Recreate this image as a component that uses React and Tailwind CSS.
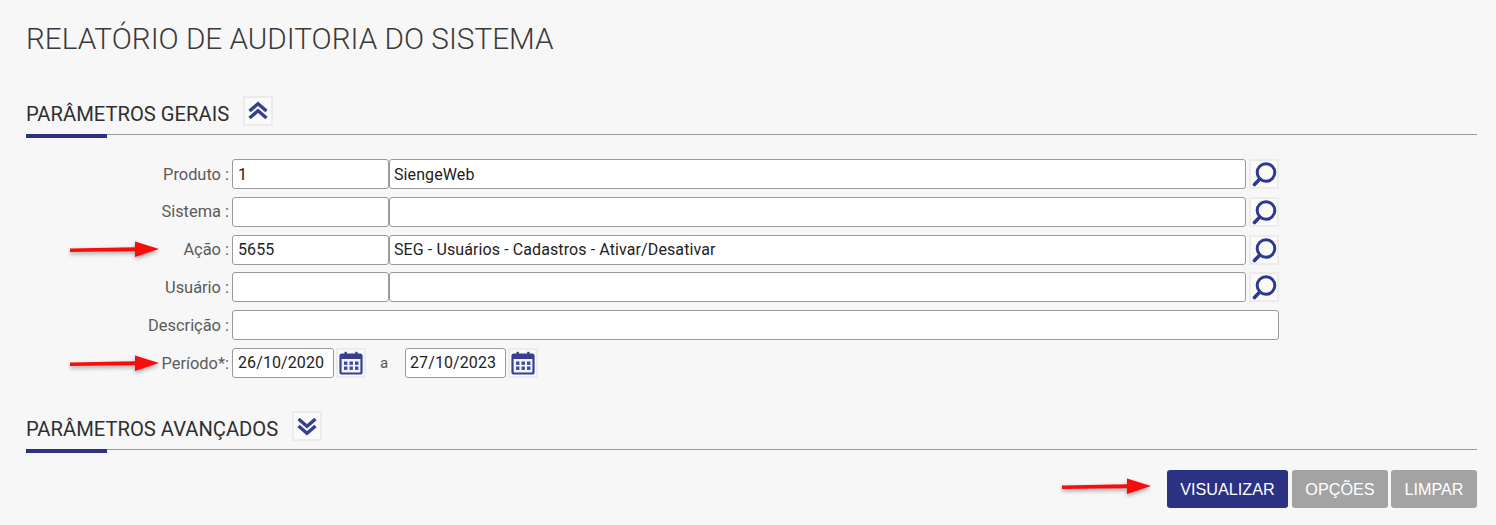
import React from "react";

const Chevrons = ({ up }) => (
  <svg width="22" height="20" viewBox="0 0 22 20" fill="none" stroke="#36408f" strokeWidth="3.4" strokeLinejoin="miter" className={up ? "" : "rotate-180"}>
    <path d="M2.5 10 L11 2.8 L19.5 10" />
    <path d="M2.5 17 L11 9.8 L19.5 17" />
  </svg>
);

const Magnifier = () => (
  <svg width="26" height="26" viewBox="0 0 26 26" fill="none" stroke="#2e3a8f" className="shrink-0">
    <circle cx="15" cy="11.5" r="8.8" strokeWidth="3" />
    <path d="M8.8 18 L3.5 23.5" strokeWidth="3.6" strokeLinecap="round" />
  </svg>
);

const Calendar = () => (
  <svg width="24" height="24" viewBox="0 0 24 24" fill="none">
    <rect x="1.5" y="3.5" width="21" height="19" rx="1.5" stroke="#36408f" strokeWidth="2.2" fill="#f4f5fb" />
    <rect x="1.5" y="3.5" width="21" height="4.5" fill="#36408f" />
    <rect x="5.5" y="0.8" width="2.4" height="4.5" fill="#36408f" />
    <rect x="16.2" y="0.8" width="2.4" height="4.5" fill="#36408f" />
    {[5, 10.5, 16].map((x) =>
      [10.5, 15.5].map((y) => <rect key={x + "-" + y} x={x} y={y} width="3.4" height="3.4" fill="#3d4a9e" />)
    )}
  </svg>
);

const IconBox = ({ children, className = "" }) => (
  <span className={"flex h-[30px] w-[30px] shrink-0 items-center justify-center border-2 border-[#ececec] bg-[#fafafa] " + className}>
    {children}
  </span>
);

const Field = ({ value = "", className = "" }) => (
  <input
    readOnly
    value={value}
    className={"h-[30px] rounded-[3px] border border-[#9a9a9a] bg-white text-[16px] tracking-[0.1px] text-[#222] outline-none " + className}
  />
);

const Label = ({ children }) => (
  <span className="w-[206px] shrink-0 whitespace-nowrap pr-[3px] pt-[2px] text-right text-[16.4px] text-[#5b5b5b]">{children}</span>
);

const Row = ({ children, className = "" }) => (
  <div className={"flex h-[30px] items-center " + className}>{children}</div>
);

const LookupRow = ({ label, code, name }) => (
  <Row>
    <Label>{label}</Label>
    <Field value={code} className="w-[157px] px-[5px]" />
    <Field value={name} className="w-[857px] px-[4px]" />
    <IconBox className="ml-[3px]"><Magnifier /></IconBox>
  </Row>
);

const Section = ({ title, up, className = "" }) => (
  <div className={"relative flex h-[40px] items-start border-b border-[#9a9a9a] " + className}>
    <span className="pt-[6px] text-[20.2px] leading-[26px] text-[#2f2f2f]">{title}</span>
    <IconBox className="ml-[14px] mt-[1px]"><Chevrons up={up} /></IconBox>
    <span className="absolute bottom-[-4px] left-0 h-[4px] w-[81px] bg-[#2b3183]" />
  </div>
);

const Arrow = ({ className }) => (
  <svg width="98" height="30" viewBox="0 0 98 30" className={"absolute " + className}>
    <defs>
      <filter id="arrowShadow" x="-10%" y="-50%" width="120%" height="200%">
        <feDropShadow dx="0" dy="2" stdDeviation="2" floodColor="#000" floodOpacity="0.35" />
      </filter>
    </defs>
    <path d="M2 12.5 L67 11.3 L67 5.5 L91 13 L67 21 L67 15.3 L2 16 Z" fill="#f70d0d" filter="url(#arrowShadow)" />
  </svg>
);

export default function App() {
  return (
    <div className="relative h-[525px] w-[1496px] overflow-hidden bg-[#f7f7f7] font-['Roboto',sans-serif]">
      <div className="px-[26px] pt-[20px]">
        <h1 className="text-[29.7px] leading-[37px] font-light text-[#3a3a3a]">RELATÓRIO DE AUDITORIA DO SISTEMA</h1>
        <Section title="PARÂMETROS GERAIS" up className="mt-[38px] w-[1451px]" />
        <div className="mt-[24px] flex flex-col gap-[7.8px]">
          <LookupRow label="Produto :" code="1" name="SiengeWeb" />
          <LookupRow label="Sistema :" />
          <LookupRow label="Ação :" code="5655" name="SEG - Usuários - Cadastros - Ativar/Desativar" />
          <LookupRow label="Usuário :" />
          <Row>
            <Label>Descrição :</Label>
            <Field className="w-[1047px] px-[4px]" />
          </Row>
          <Row>
            <Label>Período*:</Label>
            <Field value="26/10/2020" className="w-[102px] px-[5px]" />
            <IconBox className="ml-[2px]"><Calendar /></IconBox>
            <span className="ml-[14px] w-[25px] text-[15px] text-[#555]">a</span>
            <Field value="27/10/2023" className="w-[101px] px-[4px]" />
            <IconBox className="ml-[2px]"><Calendar /></IconBox>
          </Row>
        </div>
        <Section title="PARÂMETROS AVANÇADOS" className="mt-[32px] w-[1451px]" />
        <div className="mt-[20px] flex w-[1451px] justify-end font-['Liberation_Sans',sans-serif] text-[16.2px] text-white">
          <button className="h-[38px] w-[121px] rounded-[3px] bg-[#2b3183]">VISUALIZAR</button>
          <button className="ml-[4px] h-[38px] w-[96px] rounded-[3px] bg-[#a3a3a3]">OPÇÕES</button>
          <button className="ml-[3px] h-[38px] w-[86px] rounded-[3px] bg-[#a3a3a3]">LIMPAR</button>
        </div>
      </div>
      <Arrow className="left-[68px] top-[236px]" />
      <Arrow className="left-[68px] top-[350px]" />
      <Arrow className="left-[1060px] top-[473px]" />
    </div>
  );
}
